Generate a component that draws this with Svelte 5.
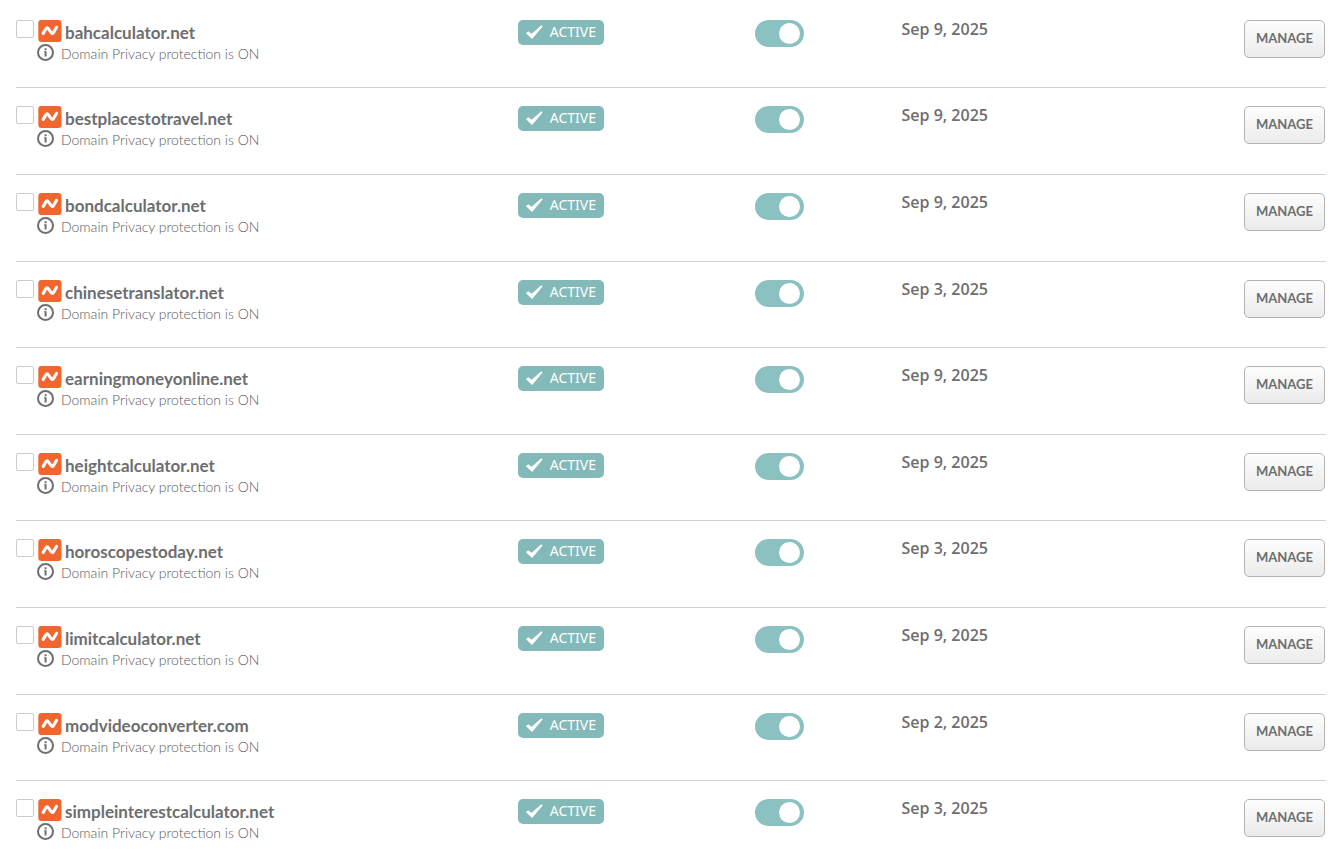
<script>
  let domains = $state([
    { name: 'bahcalculator.net', expires: 'Sep 9, 2025', selected: false, autoRenew: true },
    { name: 'bestplacestotravel.net', expires: 'Sep 9, 2025', selected: false, autoRenew: true },
    { name: 'bondcalculator.net', expires: 'Sep 9, 2025', selected: false, autoRenew: true },
    { name: 'chinesetranslator.net', expires: 'Sep 3, 2025', selected: false, autoRenew: true },
    { name: 'earningmoneyonline.net', expires: 'Sep 9, 2025', selected: false, autoRenew: true },
    { name: 'heightcalculator.net', expires: 'Sep 9, 2025', selected: false, autoRenew: true },
    { name: 'horoscopestoday.net', expires: 'Sep 3, 2025', selected: false, autoRenew: true },
    { name: 'limitcalculator.net', expires: 'Sep 9, 2025', selected: false, autoRenew: true },
    { name: 'modvideoconverter.com', expires: 'Sep 2, 2025', selected: false, autoRenew: true },
    { name: 'simpleinterestcalculator.net', expires: 'Sep 3, 2025', selected: false, autoRenew: true }
  ]);
</script>

<main>
  <table>
    <colgroup>
      <col class="col-domain" />
      <col class="col-status" />
      <col class="col-renew" />
      <col />
      <col class="col-action" />
    </colgroup>
    <tbody>
      {#each domains as domain (domain.name)}
        <tr>
          <td>
            <div class="domain">
              <input type="checkbox" class="select" aria-label="Select {domain.name}" bind:checked={domain.selected} />
              <div class="details">
                <div class="title">
                  <svg class="logo" viewBox="0 0 24 22" width="24" height="22" aria-hidden="true">
                    <rect x="0.3" width="23.2" height="22" rx="3" fill="#f1662f" />
                    <path d="M5.2 13.4 7.9 8.8Q9.1 6.9 10.4 8.8L13.2 12.6Q14.5 14.4 15.7 12.2L18.6 7.3" fill="none" stroke="#fff" stroke-width="3.1" stroke-linecap="round" stroke-linejoin="round" />
                  </svg>
                  <a href="#{domain.name}">{domain.name}</a>
                </div>
                <div class="privacy">
                  <svg viewBox="0 0 18 18" width="18" height="18" aria-hidden="true">
                    <circle cx="8.5" cy="8.5" r="7.5" fill="none" stroke="#6d6e70" stroke-width="2" />
                    <path d="M7.6 4.3h2v2h-2zM7 7.2h2.6v5.3h-2V8.3H7z" fill="#6d6e70" />
                  </svg>
                  <span>Domain Privacy protection is ON</span>
                </div>
              </div>
            </div>
          </td>
          <td>
            <span class="badge">
              <svg viewBox="0 0 18 16" width="18" height="16" aria-hidden="true">
                <path d="M0 8.2 2.2 6.2 5.6 8.8 15.4.2 16.6 1.4 6.1 14z" fill="#fff" />
              </svg>
              <span>ACTIVE</span>
            </span>
          </td>
          <td>
            <input type="checkbox" class="toggle" role="switch" aria-label="Auto-renew {domain.name}" bind:checked={domain.autoRenew} />
          </td>
          <td><span class="date">{domain.expires}</span></td>
          <td class="action"><button type="button">MANAGE</button></td>
        </tr>
      {/each}
    </tbody>
  </table>
</main>

<style>
  :global(body) {
    margin: 0;
    background: #fff;
  }
  main {
    padding: 2px 17px 0 16px;
    color: #6d6e70;
    font-family: Lato, 'Open Sans', sans-serif;
  }
  table {
    width: 100%;
    table-layout: fixed;
    border-collapse: separate;
    border-spacing: 0;
  }
  .col-domain { width: 38.3%; }
  .col-status { width: 18.1%; }
  .col-renew { width: 11.2%; }
  .col-action { width: 90px; }

  td {
    box-sizing: border-box;
    height: 87px;
    padding: 18px 0 0;
    vertical-align: top;
    border-bottom: 1px solid #d1d2d3;
  }
  tr:nth-child(5n + 1) td,
  tr:nth-child(5n + 4) td { height: 86px; }
  tr:last-child td {
    height: auto;
    border-bottom: 0;
  }

  /* domain cell */
  .domain {
    display: flex;
    align-items: flex-start;
    gap: 4px;
  }
  .select {
    appearance: none;
    box-sizing: border-box;
    flex-shrink: 0;
    width: 18px;
    height: 18px;
    margin: 0;
    border: 1px solid #cbcccd;
    border-radius: 2px;
    background: #fff;
  }
  .select:checked { background: #83bbba; }
  .title {
    display: flex;
    gap: 3px;
    height: 24px;
  }
  .title a {
    color: inherit;
    font-size: 17px;
    font-weight: 700;
    line-height: 26px;
    text-decoration: none;
  }
  .privacy {
    display: flex;
    gap: 6px;
    margin-left: -1px;
    font-size: 14px;
    font-weight: 300;
    line-height: 20px;
  }
  .privacy span { color: #58595b; }
  .logo,
  .privacy svg,
  .badge svg {
    display: block;
    flex-shrink: 0;
  }

  /* status */
  .badge {
    display: inline-flex;
    align-items: center;
    gap: 6px;
    box-sizing: border-box;
    height: 25px;
    padding: 0 8px;
    border-radius: 5px;
    background: #83b9b8;
    color: #fff;
    font-family: 'Noto Sans', sans-serif;
    font-size: 14px;
    line-height: 20px;
    vertical-align: top;
  }
  .badge span { padding-bottom: 2px; }

  /* auto-renew switch */
  .toggle {
    appearance: none;
    display: block;
    box-sizing: border-box;
    width: 49px;
    height: 27px;
    margin: 0;
    padding: 3px 4px;
    border-radius: 14px;
    background: #c4c5c6;
    cursor: pointer;
  }
  .toggle::before {
    content: '';
    display: block;
    width: 21px;
    height: 21px;
    border-radius: 50%;
    background: #fff;
  }
  .toggle:checked { background: #8bc1c1; }
  .toggle:checked::before { margin-left: auto; }

  .date {
    display: block;
    font-family: 'Open Sans', sans-serif;
    font-size: 16px;
    font-weight: 600;
    line-height: 18px;
  }

  .action {
    padding-right: 1px;
    text-align: right;
  }
  button {
    box-sizing: border-box;
    width: 81px;
    height: 38px;
    padding: 0 0 2px;
    border: 1px solid #b3b3b3;
    border-radius: 5px;
    background: linear-gradient(#fdfdfd, #ebebeb);
    color: #6d6e70;
    font: 700 13px/34px Lato, sans-serif;
    cursor: pointer;
  }
</style>
